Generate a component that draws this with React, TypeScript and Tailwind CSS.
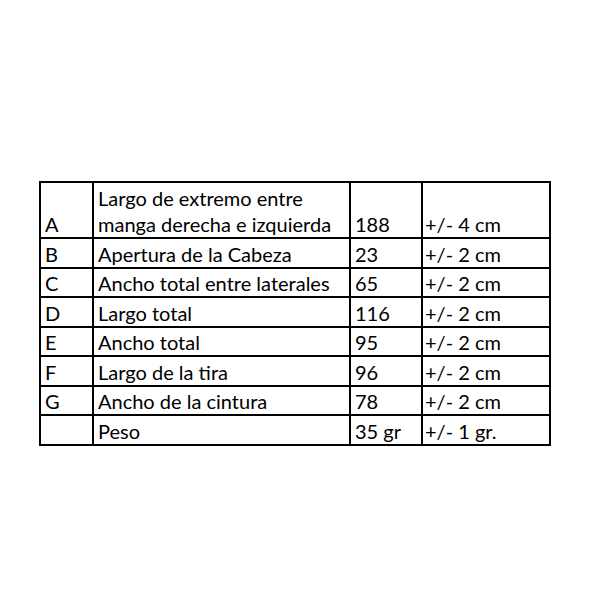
const rows = [
  { k: "A", label: ["Largo de extremo entre", "manga derecha e izquierda"], value: "188", tol: "+/- 4 cm" },
  { k: "B", label: ["Apertura de la Cabeza"], value: "23", tol: "+/- 2 cm" },
  { k: "C", label: ["Ancho total entre laterales"], value: "65", tol: "+/- 2 cm" },
  { k: "D", label: ["Largo total"], value: "116", tol: "+/- 2 cm" },
  { k: "E", label: ["Ancho total"], value: "95", tol: "+/- 2 cm" },
  { k: "F", label: ["Largo de la tira"], value: "96", tol: "+/- 2 cm" },
  { k: "G", label: ["Ancho de la cintura"], value: "78", tol: "+/- 2 cm" },
  { k: "", label: ["Peso"], value: "35 gr", tol: "+/- 1 gr." },
];

export default function App() {
  return (
    <div className="w-[600px] h-[600px] bg-white pt-[181px] pl-[39px]">
      <table
        className="border-collapse text-black text-[20px] leading-[26px] table-fixed w-[510px]"
        style={{ fontFamily: "Lato, 'Open Sans', sans-serif" }}
      >
        <colgroup>
          <col className="w-[53px]" />
          <col className="w-[257px]" />
          <col className="w-[72px]" />
          <col className="w-[128px]" />
        </colgroup>
        <tbody>
          {rows.map((r, i) => (
            <tr key={i} className={i === 0 ? "h-[56px]" : "h-[29.5px]"}>
              <td className="border-2 border-black align-bottom pl-[4px]">{r.k}</td>
              <td className="border-2 border-black align-bottom pl-[4px] whitespace-nowrap">
                {r.label.map((l, j) => (
                  <div key={j}>{l}</div>
                ))}
              </td>
              <td className="border-2 border-black align-bottom pl-[4px]">{r.value}</td>
              <td className="border-2 border-black align-bottom pl-[2px]">{r.tol}</td>
            </tr>
          ))}
        </tbody>
      </table>
    </div>
  );
}
